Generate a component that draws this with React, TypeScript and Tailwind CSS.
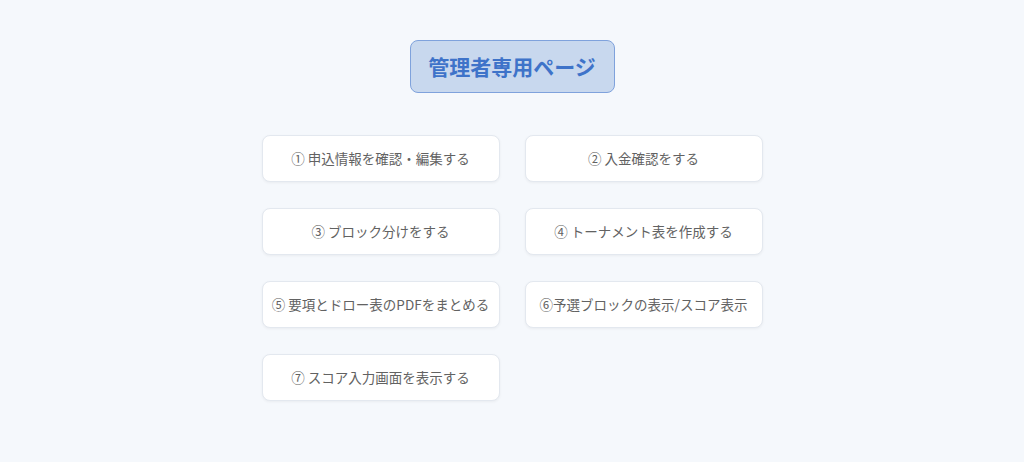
const menuItems = [
  "① 申込情報を確認・編集する",
  "② 入金確認をする",
  "③ ブロック分けをする",
  "④ トーナメント表を作成する",
  "⑤ 要項とドロー表のPDFをまとめる",
  "⑥予選ブロックの表示/スコア表示",
  "⑦ スコア入力画面を表示する",
];

const App = () => {
  return (
    <div
      className="min-h-[462px] w-full bg-[#f5f8fc] pt-10"
      style={{ fontFamily: '"Noto Sans CJK JP", "Noto Sans", sans-serif' }}
    >
      <div className="flex flex-col items-center">
        <h1 className="flex h-[53px] w-[205px] items-center justify-center rounded-lg border border-[#7fa2dc] bg-[#c8d8ee] text-[21px] font-bold text-[#3e73c9]">
          管理者専用ページ
        </h1>
        <div className="mt-[42px] grid grid-cols-[238px_238px] gap-x-[25px] gap-y-[26px]">
          {menuItems.map((item) => (
            <button
              key={item}
              type="button"
              className="flex h-[47px] items-center justify-center rounded-lg border border-[#e3e8ef] bg-white text-[13.5px] text-[#626262] shadow-[0_1px_3px_rgba(0,0,0,0.05)]"
            >
              {item}
            </button>
          ))}
        </div>
      </div>
    </div>
  );
};

export default App;
